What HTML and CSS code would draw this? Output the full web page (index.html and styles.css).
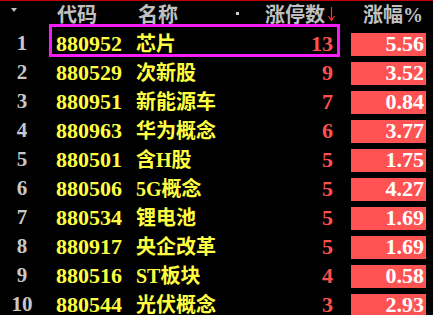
FILE: index.html
```html
<!DOCTYPE html>
<html>
<head>
<meta charset="utf-8">
<link rel="stylesheet" href="styles.css">
</head>
<body>
<div class="board">
  <div class="row head">
    <div class="idx"><span class="tri"></span></div>
    <div class="code">代码</div>
    <div class="name"><span>名称</span><span class="dot"></span></div>
    <div class="zt"><span>涨停数</span><svg class="arrow" width="7" height="14" viewBox="0 0 7 14"><path d="M3.5 0V13" stroke="#ff3030" stroke-width="1.2"/><path d="M0.5 9L3.5 13.5L6.5 9" fill="none" stroke="#ff3030" stroke-width="1.2"/></svg></div>
    <div class="pcth">涨幅%</div>
  </div>
  <div class="row sel">
    <div class="idx">1</div><div class="code">880952</div><div class="name">芯片</div><div class="zt">13</div><div class="pct"><span>5.56</span></div>
    <div class="hl"></div>
  </div>
  <div class="row"><div class="idx">2</div><div class="code">880529</div><div class="name">次新股</div><div class="zt">9</div><div class="pct"><span>3.52</span></div></div>
  <div class="row"><div class="idx">3</div><div class="code">880951</div><div class="name">新能源车</div><div class="zt">7</div><div class="pct"><span>0.84</span></div></div>
  <div class="row"><div class="idx">4</div><div class="code">880963</div><div class="name">华为概念</div><div class="zt">6</div><div class="pct"><span>3.77</span></div></div>
  <div class="row"><div class="idx">5</div><div class="code">880501</div><div class="name">含H股</div><div class="zt">5</div><div class="pct"><span>1.75</span></div></div>
  <div class="row"><div class="idx">6</div><div class="code">880506</div><div class="name">5G概念</div><div class="zt">5</div><div class="pct"><span>4.27</span></div></div>
  <div class="row"><div class="idx">7</div><div class="code">880534</div><div class="name">锂电池</div><div class="zt">5</div><div class="pct"><span>1.69</span></div></div>
  <div class="row"><div class="idx">8</div><div class="code">880917</div><div class="name">央企改革</div><div class="zt">5</div><div class="pct"><span>1.69</span></div></div>
  <div class="row"><div class="idx">9</div><div class="code">880516</div><div class="name">ST板块</div><div class="zt">4</div><div class="pct"><span>0.58</span></div></div>
  <div class="row"><div class="idx">10</div><div class="code">880544</div><div class="name">光伏概念</div><div class="zt">3</div><div class="pct"><span>2.93</span></div></div>
</div>
</body>
</html>
```

FILE: styles.css
```css
html, body {
  margin: 0;
  padding: 0;
  background: #000;
  width: 433px;
  height: 315px;
  overflow: hidden;
}
.board {
  border-top: 1px solid #c80000;
  font-family: "Liberation Serif", "Noto Sans CJK SC", serif;
  font-weight: bold;
  line-height: 1;
  white-space: nowrap;
}
.row {
  position: relative;
  display: grid;
  grid-template-columns: 44px 92px 137px 78px 75px;
  padding-right: 7px;
  height: 29px;
  align-items: center;
}
.head {
  height: 28px;
  color: #c0c0c0;
  font-size: 20px;
}
.idx {
  color: #c8c8c8;
  font-size: 21px;
  display: flex;
  justify-content: center;
  align-items: center;
}
.tri {
  width: 0;
  height: 0;
  border-left: 3.5px solid transparent;
  border-right: 3.5px solid transparent;
  border-top: 4px solid #c0c0c0;
  margin-top: -10px;
  margin-left: -16px;
}
.code {
  padding-left: 12px;
  color: #ffff40;
  font-size: 22px;
}
.head .code { color: #c0c0c0; font-size: 20px; padding-left: 13px; }
.name {
  color: #ffff40;
  font-size: 20px;
  display: flex;
  align-items: center;
}
.head .name { color: #c0c0c0; padding-left: 2px; }
.dot {
  width: 3px;
  height: 3px;
  background: #d0d0d0;
  margin-left: auto;
  margin-right: 34px;
  margin-top: -3px;
}
.zt {
  text-align: right;
  padding-right: 18px;
  color: #ff5050;
  font-size: 22px;
}
.head .zt {
  color: #c0c0c0;
  font-size: 20px;
  padding-right: 16px;
  display: flex;
  justify-content: flex-end;
  align-items: center;
  min-width: 0;
}
.head .zt span { flex: none; }
.arrow { flex: none; margin-left: 3px; margin-top: -2px; }
.pcth {
  text-align: right;
  padding-right: 3px;
}
.pct {
  height: 23px;
  background: #ff5252;
  color: #fff;
  font-size: 22px;
  display: flex;
  justify-content: flex-end;
  align-items: center;
  padding-right: 2px;
  margin-top: 1px;
}
.hl {
  position: absolute;
  left: 49px;
  top: -5px;
  width: 291px;
  height: 33px;
  box-sizing: border-box;
  border: 3px solid #f61ef6;
  pointer-events: none;
}
```
